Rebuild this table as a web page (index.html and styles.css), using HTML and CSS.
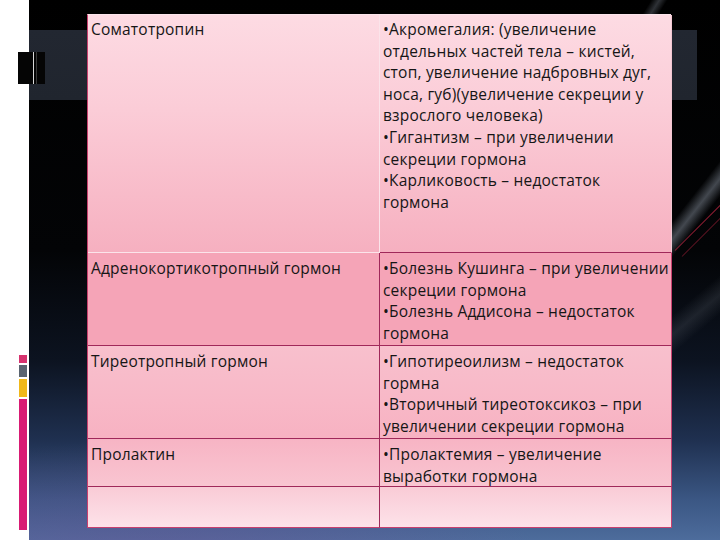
FILE: index.html
```html
<!DOCTYPE html>
<html lang="ru">
<head>
<meta charset="utf-8">
<title>Гормоны гипофиза</title>
<link rel="stylesheet" href="styles.css">
</head>
<body>
<div class="stage">
  <div class="ray ray-a"></div>
  <div class="ray ray-b"></div>
  <div class="ray ray-c"></div>
  <div class="redline red-a"></div>
  <div class="redline red-b"></div>
  <svg class="bars" width="28" height="32" viewBox="0 0 28 32">
    <rect x="0" y="0" width="28" height="32" fill="#050505"/>
    <line x1="0.5" y1="0" x2="0.5" y2="32" stroke="#ffffff" stroke-width="1"/>
    <line x1="16.5" y1="0" x2="16.5" y2="32" stroke="#d8d8d8" stroke-width="1"/>
    <line x1="19.5" y1="0" x2="19.5" y2="32" stroke="#3a3a3a" stroke-width="1"/>
  </svg>
  <div class="strip">
    <span class="seg seg-pink"></span>
    <span class="seg seg-gray"></span>
    <span class="seg seg-yellow"></span>
    <span class="seg seg-magenta"></span>
  </div>

  <div class="table">
    <div class="cell r1 c1"><p>Соматотропин</p></div>
    <div class="cell r1 c2">
      <p>•Акромегалия: (увеличение<br>отдельных частей тела – кистей,<br>стоп, увеличение надбровных дуг,<br>носа, губ)(увеличение секреции у<br>взрослого человека)</p>
      <p>•Гигантизм – при увеличении<br>секреции гормона</p>
      <p>•Карликовость – недостаток<br>гормона</p>
    </div>

    <div class="cell r2 c1"><p>Адренокортикотропный гормон</p></div>
    <div class="cell r2 c2">
      <p>•Болезнь Кушинга – при увеличении<br>секреции гормона</p>
      <p>•Болезнь Аддисона – недостаток<br>гормона</p>
    </div>

    <div class="cell r3 c1"><p>Тиреотропный гормон</p></div>
    <div class="cell r3 c2">
      <p>•Гипотиреоилизм – недостаток<br>гормна</p>
      <p>•Вторичный тиреотоксикоз – при<br>увеличении секреции гормона</p>
    </div>

    <div class="cell r4 c1"><p>Пролактин</p></div>
    <div class="cell r4 c2">
      <p>•Пролактемия – увеличение<br>выработки гормона</p>
    </div>

    <div class="cell r5 c1"></div>
    <div class="cell r5 c2"></div>
  </div>
</div>
</body>
</html>
```
FILE: styles.css
```css
html, body {
  margin: 0;
  padding: 0;
}

body {
  width: 720px;
  height: 540px;
  overflow: hidden;
  font-family: "Open Sans", "Liberation Sans", Arial, sans-serif;
}

.stage {
  position: relative;
  width: 720px;
  height: 540px;
  box-sizing: border-box;
  padding: 14px 0 0 87px;
  overflow: hidden;
  background:
    linear-gradient(#ffffff, #ffffff) 0 0 / 29px 540px no-repeat,
    linear-gradient(#222731, #20252e) 29px 30px / 668px 70px no-repeat,
    radial-gradient(ellipse 380px 120px at 160px 560px, rgba(110, 80, 150, 0.45), rgba(110, 80, 150, 0) 100%),
    linear-gradient(180deg, #000000 0px, #030406 250px, #0c1320 360px, #1f3050 440px, #3b5784 500px, #4d6c9c 540px);
}

.ray {
  position: absolute;
  height: 22px;
  transform-origin: 0 50%;
  background: linear-gradient(180deg, rgba(90, 98, 110, 0), rgba(120, 128, 140, 0.55) 50%, rgba(90, 98, 110, 0));
}

.ray-a {
  left: 640px;
  top: 270px;
  width: 220px;
  transform: rotate(-52deg);
}

.ray-b {
  left: 630px;
  top: 40px;
  width: 120px;
  height: 14px;
  transform: rotate(-58deg);
  opacity: 0.7;
}

.ray-c {
  left: 660px;
  top: 330px;
  width: 160px;
  height: 30px;
  transform: rotate(-40deg);
  opacity: 0.35;
}

.redline {
  position: absolute;
  height: 1px;
  background: rgba(200, 40, 70, 0.7);
  transform-origin: 0 50%;
  transform: rotate(-45deg);
  width: 140px;
}

.red-a {
  left: 675px;
  top: 250px;
}

.red-b {
  left: 682px;
  top: 256px;
  opacity: 0.6;
}

.bars {
  position: absolute;
  left: 17px;
  top: 52px;
  display: block;
}

.strip {
  position: absolute;
  left: 19px;
  top: 355px;
  width: 8px;
  display: flex;
  flex-direction: column;
  gap: 2px;
  outline: 1px solid rgba(255, 255, 255, 0.6);
}

.seg {
  display: block;
}

.seg-pink { height: 8px; background: #d6336f; }
.seg-gray { height: 12px; background: #5a6470; }
.seg-yellow { height: 18px; background: #f0b81a; }
.seg-magenta { height: 131px; background: #d81b74; }

.table {
  position: relative;
  width: 584px;
  display: grid;
  grid-template-columns: 292px 292px;
  grid-template-rows: 238px 93px 93px 48px 41px;
  border-left: 1px solid #c8406f;
  border-top: 1px solid #fbe5eb;
  box-sizing: border-box;
}

.cell {
  box-sizing: border-box;
  padding: 4px 3px 0 3px;
  border-right: 1px solid #a0285a;
  border-bottom: 1px solid #a0285a;
  font-size: 15.5px;
  letter-spacing: 0.2px;
  line-height: 21.6px;
  color: #161616;
  white-space: nowrap;
}

.cell p {
  margin: 0;
}

.r1 {
  background: linear-gradient(180deg, #fddbe3 0%, #fbccd7 40%, #f6b0c0 100%);
  border-bottom-color: #fbe4ea;
  border-right-color: #fbe4ea;
}

.r1.c2 {
  border-bottom-color: #a0285a;
  border-right-color: #f3c7d2;
}

.r2 {
  background: #f5a4b7;
  padding-top: 5px;
}

.r3 {
  background: linear-gradient(180deg, #f8c0cd 0%, #f8b8c7 60%, #f7b2c2 100%);
  padding-top: 5px;
}

.r4 {
  background: linear-gradient(180deg, #f7b4c4 0%, #f9c5d1 100%);
  padding-top: 5px;
}

.r5 {
  background: linear-gradient(180deg, #f9cbd6 0%, #fde2e9 100%);
  border-bottom-color: #c8406f;
}

.c2 {
  border-right-color: #c8406f;
}
```
